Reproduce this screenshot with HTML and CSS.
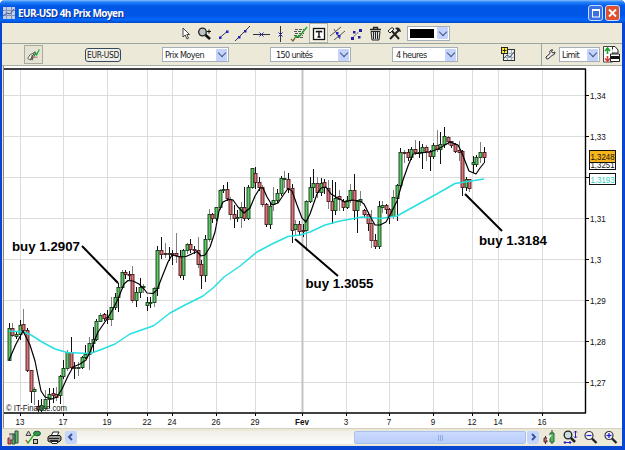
FILE: index.html
```
<!DOCTYPE html>
<html lang="fr">
<head>
    <meta charset="UTF-8">
    <title>EUR-USD 4h Prix Moyen</title>
    <link rel="stylesheet" href="styles.css">
</head>
<body>
    <div class="window">
        <div class="titlebar">
            <svg class="logo" width="12" height="12" viewBox="0 0 12 12"><rect width="12" height="12" fill="#c3cce0"/><path d="M0 3.5H12M0 8.5H12M3.5 0V12M8.5 0V12" stroke="#8792b8"/><path d="M0 9L4 6L7 7L11 2" stroke="#405aa0" fill="none"/></svg>
            <span class="name">EUR-USD 4h Prix Moyen</span>
            <div class="winbtn"><svg width="14" height="15"><rect x="3.5" y="4" width="7" height="7" fill="none" stroke="#fff"/><path d="M3 4H11" stroke="#fff" stroke-width="2"/></svg></div>
            <div class="winbtn close"><svg width="14" height="15"><path d="M3 3.500L10 10.500M10 3.500L3 10.500" stroke="#fff" stroke-width="1.8"/></svg></div>
        </div>

        <div class="tools">
            <svg class="tool" viewBox="0 0 19 20"><path d="M7 5V14L9.2 12L11 16L12.5 15.2L10.8 11.5H13.5Z" fill="#fff" stroke="#333" stroke-width=".9"/></svg>
            <svg class="tool" viewBox="0 0 19 20"><circle cx="7.5" cy="9" r="3.8" fill="#bcc4c4" stroke="#222" stroke-width="1.3"/><path d="M10.5 12L15 16" stroke="#111" stroke-width="2.6"/><path d="M12 8.5H16M14 6.5V10.5" stroke="#111"/></svg>
            <svg class="tool" viewBox="0 0 19 20"><path d="M6 14.5L13 8.5" stroke="#446"/><path d="M5 13.5h2.5v2.5H5zM12 7.5h2.5v2.5H12z" fill="#2222b4"/></svg>
            <svg class="tool" viewBox="0 0 19 20"><path d="M2 18L17 3" stroke="#333"/><path d="M5 13h2.500v2.500H5zM11 7h2.500v2.500H11z" fill="#2222b4"/></svg>
            <svg class="tool" viewBox="0 0 19 20"><path d="M1 11.500H18" stroke="#333"/><path d="M7.500 9.500L11.500 13.500M11.500 9.500L7.500 13.500" stroke="#2222b4"/></svg>
            <svg class="tool" viewBox="0 0 19 20"><path d="M9.500 3V19" stroke="#333"/><path d="M7.500 9.500L11.500 13.500M11.500 9.500L7.500 13.500" stroke="#2222b4"/></svg>
            <svg class="tool" viewBox="0 0 19 20"><path d="M5 6.500H14M4 8.500H13M5 10.500H14M4 12.500H13M6 14.500H14" stroke="#555" stroke-dasharray="3 1"/><path d="M1 16L3 18L6 13L9 14L17 4" fill="none" stroke="#17a22b" stroke-width="1.300"/><path d="M1 16L3 18L5 15" fill="none" stroke="#d33"/></svg>
            <svg class="tool pressed" viewBox="1 1 17 18"><rect x="4.500" y="5.500" width="11" height="11" fill="#fff" stroke="#111" stroke-width="1.300"/><path d="M7.500 9.500V8.500H12.500V9.500M10 8.500V14M8.500 14H11.500" fill="none" stroke="#111" stroke-width="1.400"/></svg>
            <svg class="tool" viewBox="0 0 19 20"><path d="M2 13L13 4M6 17L17 8M6 6L12 16" stroke="#555"/><path d="M8 9h2.500v2.500H8zM10 12h2.500v2.500H10z" fill="#2222c4"/></svg>
            <svg class="tool" viewBox="0 0 19 20"><path d="M5 15L14 7" stroke="#446" stroke-dasharray="2 1"/><path d="M4 14h3v3H4zM12 6h3v3h-3zM6 8h2.500v2.500H6zM11 13h2.500v2.500H11z" fill="#22229c"/></svg>
            <svg class="tool" viewBox="0 0 19 20"><path d="M4 6.500H15M7.500 6V4.500H11.500V6" fill="none" stroke="#222" stroke-width="1.300"/><path d="M5 8.500H14L13 17H6Z" fill="#ddd" stroke="#222"/><path d="M7.500 9V16M9.500 9V16M11.500 9V16" stroke="#222"/></svg>
            <svg class="tool" viewBox="0 0 19 20"><path d="M5 16L14 7M7 8L14 16" stroke="#222" stroke-width="2"/><path d="M3 8L7 4.500L9 6L5 10Z" fill="#fff" stroke="#222"/><path d="M10 5Q15 3 16 9L13 8Z" fill="#222"/></svg>
            <div class="combo color"><span class="swatch"></span><span class="arrow"></span></div>
        </div>

        <div class="options">
            <svg class="edit" viewBox="0 0 19 19"><path d="M3 14Q5 9 9 8Q12 5 12 8L9 14Q5 17 3 14" fill="#f4f3ea" stroke="#555"/><path d="M6 15L11 7M8 10V16" stroke="#333"/><path d="M10 11L12 8L13 10L16 4" fill="none" stroke="#19a52c" stroke-width="1.300"/><path d="M10 12.500H14" stroke="#c55"/></svg>
            <div class="symbol">EUR-USD</div>
            <div class="combo price"><span>Prix Moyen</span><span class="arrow"></span></div>
            <div class="combo units"><span>150 unités</span><span class="arrow"></span></div>
            <div class="combo period"><span>4 heures</span><span class="arrow"></span></div>
            <svg class="addchart" width="15" height="15"><rect x="2.500" y="2.500" width="11" height="11" fill="#e7ecf0" stroke="#333"/><path d="M3 6.500H13M3 10.500H13M6.500 3V13M10.500 3V13" stroke="#a4b1c0"/><path d="M3 11L6 8L9 10L13 5" fill="none" stroke="#456"/><rect x=".5" y=".5" width="6" height="6" fill="#ffed32" stroke="#222"/><path d="M1.500 3.500H5.500M3.500 1.500V5.500" stroke="#222"/></svg>
            <div class="orders">
                <svg width="11" height="11"><path d="M1 8L5 4.500Q4 2 6 1L7.500 .7L6.500 3L8 4L10 3Q10 6 7 6.500L3 10Q1 10.500 1 8Z" fill="#eee" stroke="#333"/></svg>
                <div class="combo limit"><span>Limit</span><span class="arrow"></span></div>
                <svg width="17" height="17"><path d="M.5 .5H9.500V16H.5Z" fill="#fff" stroke="#444"/><path d="M4.500 8V3M2 5L4.500 2L7 5" fill="none" stroke="#16a52c" stroke-width="1.600"/><path d="M4.500 10V15M2 12.500L4.500 15L7 12.500" fill="none" stroke="#dc3a3a" stroke-width="1.600"/><path d="M9.500 3V.5H12L15 4V7H9M7.500 8H16.500V15.500H7.500Z" fill="#fff" stroke="#222"/><path d="M8 11.500H16" stroke="#111" stroke-width="3"/></svg>
            </div>
        </div>

        <svg class="chart" id="chart" width="619" height="362" viewBox="3 66 619 362"></svg>

        <div class="statusbar">
            <svg width="12" height="15"><path d="M8 1H11V13H8ZM5 4H8V14H5Z" fill="#67ba65" stroke="#254"/><path d="M1 8H4V14H1Z" fill="#e05c5c" stroke="#633"/><path d="M2 4H6V10H3" fill="#bbb" stroke="#444"/></svg>
            <svg class="shapes" width="17" height="15"><path d="M1 5.500L3.500 1L6 5.500Z" fill="#ccc" stroke="#444"/><ellipse cx="12" cy="3.500" rx="3.500" ry="2.300" fill="#2c9a4a" stroke="#254"/><path d="M1 10L3 13L8 6L11 5" fill="none" stroke="#2a2" stroke-width="1.300"/><path d="M1 10L3 13" stroke="#d44"/><rect x="8.500" y="9.500" width="4" height="4" fill="#ccb" stroke="#222"/></svg>
            <svg class="printer" width="15" height="15"><path d="M4 6L6 2H12L10 6" fill="#fff" stroke="#222"/><path d="M1 7L3 5.500H13L14 7V10L12 12H3L1 11Z" fill="#999" stroke="#111"/><path d="M2 8.500H12M3 10.500H11" stroke="#222"/><path d="M4 11.500H11L10 13.500H5Z" fill="#fff" stroke="#222"/></svg>
            <div class="scroll">
                <div class="sbtn"><svg width="12" height="12"><path d="M7 3L4 6L7 9" fill="none" stroke="#335095" stroke-width="1.800"/></svg></div>
                <div class="thumb"><i></i><i></i><i></i></div>
                <div class="sbtn"><svg width="12" height="12"><path d="M5 3L8 6L5 9" fill="none" stroke="#335095" stroke-width="1.800"/></svg></div>
            </div>
            <svg class="candleicon" width="12" height="15"><path d="M7 3H11V12H7Z" fill="#59b659" stroke="#264"/><path d="M9 0V3M9 12V14M2.500 6V14" stroke="#333"/><path d="M1 8H4V12H1Z" fill="#b66" stroke="#533"/><path d="M4 10L8 5" stroke="#eee" stroke-width="2"/></svg>
            <svg class="fit" width="15" height="15"><circle cx="5" cy="5" r="3.800" fill="#cdd" stroke="#222" stroke-width="1.300"/><path d="M8 8L12 12" stroke="#222" stroke-width="2.500"/><path d="M12.500 1V8M11 2.500L12.500 1L14 2.500M11 6.500L12.500 8L14 6.500M1 12.500H8M2.500 11L1 12.500L2.500 14M6.500 11L8 12.500L6.500 14" fill="none" stroke="#2222c0"/></svg>
            <svg class="zoomout" width="14" height="15"><circle cx="5" cy="5.500" r="4" fill="#fff" stroke="#334" stroke-width="1.200"/><path d="M2.500 5.500H7.500" stroke="#22c" stroke-width="1.300"/><path d="M8 8.500L12.500 13" stroke="#222" stroke-width="2.300"/></svg>
            <svg class="zoomin" width="14" height="15"><circle cx="5" cy="5.500" r="4" fill="#fff" stroke="#334" stroke-width="1.200"/><path d="M2.500 5.500H7.500M5 3V8" stroke="#22c" stroke-width="1.300"/><path d="M8 8.500L12.500 13" stroke="#222" stroke-width="2.300"/></svg>
        </div>
    </div>

    <script src="chart.js"></script>
</body>
</html>
```
FILE: chart.js
```
var chart = document.getElementById("chart");

// x, high, body top, body bottom, low, g = up / r = down
var candles = [
    [9,323,328,360,360,"g"],[12.5,323,328,335,336,"r"],[16.5,331,334,336,338,"g"],[20,320,325,334,339,"g"],
    [23.5,309,324,330,331,"r"],[27.3,328,330,370,371,"r"],[31,370,370,391,402,"r"],[34.5,387,389,391,404,"g"],
    [38,400,406,409,411,"r"],[41.7,399,405,410,411,"g"],[45.5,390,399,408,410,"g"],[49,388,394,399,407,"g"],
    [53,388,393,395,402,"r"],[56.7,387,394,397,400,"r"],[60.3,375,376,395,403,"g"],[63.7,360,368,376,378,"g"],
    [67.3,350,352,368,370,"g"],[71,337,352,367,369,"r"],[74.7,362,367,368,378,"r"],[78.3,362,367,368,375,"g"],
    [82,356,357,367,368,"g"],[85.7,345,354,357,358,"g"],[89.3,337,343,354,369,"g"],[93,327,339,343,352,"g"],
    [96.7,319,321,339,340,"g"],[100.3,313,315,321,321,"g"],[104,313,314,318,320,"r"],[107.6,310,317,319,323,"r"],
    [111.3,297,307,319,325,"g"],[115,293,297,307,309,"g"],[118.7,283,287,297,311,"g"],[122,270,272,287,288,"g"],
    [125.7,270,272,274,278,"r"],[129.3,271,274,275,279,"r"],[132.8,266,274,300,302,"r"],[136.5,287,292,300,306,"g"],
    [140,278,287,292,297,"g"],[143.5,284,286,287,292,"g"],[147,297,302,305,310,"g"],[150.7,297,302,303,307,"g"],
    [154.2,287,288,302,306,"g"],[157.8,246,250,288,295,"g"],[161.5,237,250,254,258,"r"],[165.3,243,253,254,257,"r"],
    [169,247,253,254,260,"g"],[172.7,250,253,254,264,"r"],[176.3,233,253,255,262,"r"],[180,250,256,275,277,"r"],
    [183.5,249,250,275,279,"g"],[187,243,244,250,253,"g"],[190.7,239,244,249,252,"r"],[194.5,246,249,250,253,"r"],
    [198,237,250,264,267,"r"],[201.7,260,264,275,288,"r"],[205.3,235,239,275,281,"g"],[209,209,214,239,241,"g"],
    [212.5,213,214,218,222,"r"],[216.3,207,207,218,220,"g"],[220,189,190,207,209,"g"],[223.7,185,189,190,192,"g"],
    [227,182,189,198,200,"r"],[230.7,197,199,214,219,"r"],[234.3,205,214,218,227,"r"],[237.7,210,217,218,221,"g"],
    [241,202,207,217,227,"g"],[244.7,187,207,218,220,"r"],[248.3,185,187,218,219,"g"],[252,168,168,187,188,"g"],
    [255.7,167,173,182,188,"r"],[259.3,177,182,187,190,"r"],[262.7,185,187,204,206,"r"],[266.3,203,204,224,226,"r"],
    [270,202,206,224,228,"g"],[273.7,187,200,204,210,"g"],[277.3,189,193,200,202,"g"],[281,176,178,193,195,"g"],
    [284.7,171,178,179,187,"g"],[288.3,173,179,188,192,"r"],[292,184,188,230,242,"r"],[295.7,220,224,229,234,"g"],
    [299.3,221,224,231,235,"r"],[303,224,230,231,236,"r"],[306.5,200,201,230,250,"g"],[310,177,187,201,202,"g"],
    [313.7,169,183,187,197,"g"],[317.3,177,183,192,197,"r"],[321,178,183,192,195,"g"],[324.7,179,182,187,193,"r"],
    [328.3,180,188,201,208,"r"],[332,180,201,210,223,"r"],[335.7,182,198,210,214,"g"],[339.3,190,196,199,210,"r"],
    [343.3,199,201,207,210,"r"],[347,196,200,207,208,"g"],[350.5,184,190,200,202,"g"],[354,174,190,210,219,"r"],
    [357.3,200,201,210,232,"g"],[360.7,191,199,201,205,"g"],[364.3,209,210,214,216,"r"],[368,212,214,223,230,"r"],
    [371.7,210,223,240,247,"r"],[375.3,234,240,246,248,"r"],[379,201,206,246,248,"g"],[382.7,201,205,207,212,"g"],
    [386,204,205,209,213,"r"],[389.7,208,209,216,223,"r"],[393.3,190,197,216,218,"g"],[397,184,185,198,220,"g"],
    [400.7,148,152,185,187,"g"],[404.3,150,152,153,162,"r"],[408,149,152,157,160,"r"],[411.7,147,149,157,159,"g"],
    [415.3,140,149,152,154,"r"],[419,141,152,153,157,"g"],[422.7,144,147,152,168,"g"],[426.3,145,147,151,160,"r"],
    [430,150,151,156,170,"r"],[433.7,143,145,156,158,"g"],[437.3,130,145,149,151,"r"],[440.7,132,144,149,163,"g"],
    [444.3,127,136,144,147,"g"],[448,136,137,141,144,"r"],[451.7,141,141,145,147,"r"],[455.3,143,144,151,152,"r"],
    [459.3,141,150,152,160,"r"],[462.7,150,151,187,195,"r"],[466.2,177,179,187,190,"g"],[469.3,179,179,188,191,"r"],
    [473,156,162,164,172,"g"],[476.7,155,157,164,166,"g"],[480.3,142,152,157,162,"g"],[484,147,152,157,162,"r"]
];

var fast = "9,360 16,344 23,331 30,345 35,361 38,376 41,391 45,397 52,399 57,397 62,389 68,376 73,367 80,364 86,360 90,352 98,332 107,319 113,309 118,299 124,284 128,280.5 133,281 139,284 144,289 147,293 153,293.5 157,290 162,277 168,262 172,255 180,257 186,256.5 197,251.5 201,256 205,255 210,247 215,232 219,211 223,202 228,199.5 233,200 238,207 244,213 250,208 255,196 260,188 263,188 267,197 272,205 278,203 284,194 288,188.5 292,191 297,205 302,218 306,222 310,214 317,194 321,188 326,187 331,194 336,197 345,202 352,200 360,201 364,204 370,216 375,225 380,225 386,222 391,213 397,201 403,180 408,166 413,154 420,153 430,152 438,149 445,145 450,142 458,145 462,153 465,161 469,171 476,174 480,168 484,163";
var slow = "9,331 24,332 31,335 42,342 55,349 67,352.5 90,353.5 100,350 115,344 130,334 150,327 154,325.5 170,313 185,305 203,296 213,288 224,277 240,266 257,252 272,244 288,236.5 300,235 310,232 325,225 340,221 362,217 380,218.5 397,216 415,206 435,195 455,183.5 468,181.5 484,179";

var prices = [["1,34",95],["1,33",136],["",177],["1,31",218],["1,3",259],["1,29",300],["1,28",341],["1,27",382]];
var days = [["13",20],["17",63],["19",107],["22",147],["24",172],["26",216],["29",255],["Fev",302],["3",346],["7",389],["9",433],["12",472],["14",498],["16",542]];

var out = "";

function line(x1, y1, x2, y2, cls)
{
    out += '<line class="' + cls + '" x1="' + x1 + '" y1="' + y1 + '" x2="' + x2 + '" y2="' + y2 + '"/>';
}

function text(str, x, y, width, cls)
{
    out += '<text class="' + cls + '" x="' + x + '" y="' + y + '" textLength="' + width + '" lengthAdjust="spacingAndGlyphs">' + str + '</text>';
}

function box(x, y, w, h, cls)
{
    out += '<rect class="' + cls + '" x="' + x + '" y="' + y + '" width="' + w + '" height="' + h + '"/>';
}

//grid and axes
prices.forEach(function(p){
    line(4, p[1] + 0.5, 585, p[1] + 0.5, "grid");
    line(586, p[1] + 0.5, 589, p[1] + 0.5, "axis");
    if(p[0]) text(p[0], 590, p[1] + 3.5, p[0].length * 4.6 - 2.6, "label");
});
days.forEach(function(d){
    line(d[1] + 0.5, 70, d[1] + 0.5, 412, d[0] == "Fev" ? "grid month" : "grid");
    line(d[1] + 0.5, 413, d[1] + 0.5, 416, "axis");
    var w = d[0] == "Fev" ? 14 : d[0].length * 4.5;
    text(d[0], d[1] - w / 2, 425, w, d[0] == "Fev" ? "label bold" : "label");
});
line(3.5, 66, 3.5, 428, "edge");
line(4, 69, 586, 69, "frame");
line(4, 413, 586, 413, "frame");
line(585.5, 69, 585.5, 413, "axis right");

//candles
candles.forEach(function(c, i){
    var x = Math.floor(c[0]) + 0.5;
    line(x, c[1], x, c[4] + 1, i % 3 == 1 ? "wick soft" : "wick");
    box(x - 1.5, c[2] + 0.5, 3, Math.max(c[3] - c[2], 0.5), c[5] == "g" ? "up" : "down");
});
out += '<polyline class="slow" points="' + slow + '"/>';
out += '<polyline class="fast" points="' + fast + '"/>';
text("© IT-Finance.com", 6, 411, 61, "credit");

//notes
line(82, 246, 118, 283, "pointer");
line(295, 239, 338, 276, "pointer");
line(465, 194, 502, 231, "pointer");
text("buy 1.2907", 12, 251, 68, "note");
text("buy 1.3055", 305.5, 287.5, 68, "note");
text("buy 1.3184", 479, 245, 68, "note");

//price tags
box(589.5, 158.5, 26, 11, "tag");
text("1,3251", 590.5, 167.5, 24, "label");
box(589.5, 150.5, 26, 12, "tag last");
text("1,3248", 590.5, 160, 24, "label");
box(589.5, 173.5, 26, 11, "tag");
text("1,3193", 590.5, 183, 24, "label cyan");

chart.innerHTML = out;
```
FILE: styles.css
```
*{
    margin: 0;
    padding: 0;
    box-sizing: border-box;
}
body{
    overflow: hidden;
    background: #fff;
    font: 9px "DejaVu Sans Condensed", "DejaVu Sans", sans-serif;
    color: #222;
}
svg{
    display: block;
    flex: none;
}
.window{
    width: 625px;
    height: 450px;
    display: flex;
    flex-direction: column;
    background: #ece9d8;
    border: solid #0845d0;
    border-width: 0 3px 4px 2px;
    border-radius: 5px 5px 0 0;
}
.titlebar{
    height: 23px;
    margin: 0 -3px 0 -2px;
    padding: 2px 5px 0 3px;
    display: flex;
    align-items: center;
    border-radius: 5px 5px 0 0;
    background: linear-gradient(#8cbcf8 0, #2383fb 2px, #0058e6 6px, #0055e5 15px, #0368fb 20px, #0047c6 23px);
}
.name{
    margin-left: 3px;
    flex: 1;
    font: bold 10px "Open Sans", sans-serif;
    letter-spacing: -0.55px;
    color: #fff;
    text-shadow: 1px 1px #0f2e8f;
    white-space: nowrap;
}
.winbtn{
    width: 15px;
    height: 16px;
    border: 1px solid #c7dcff;
    border-radius: 3px;
    background: #3971e5;
    overflow: hidden;
}
.close{
    margin-left: 2px;
    background: #df502c;
}
.tools{
    height: 20px;
    padding-left: 174px;
    display: flex;
    align-items: center;
}
.tool{
    width: 19px;
    height: 20px;
}
.pressed{
    background: #f4f3ea;
    border: 1px solid #b4b4a5;
}
.combo{
    height: 15px;
    padding: 0 1px 0 2px;
    display: flex;
    align-items: center;
    justify-content: space-between;
    background: #fff;
    border: 1px solid #a4afb9;
    white-space: nowrap;
}
.arrow{
    width: 11px;
    height: 12px;
    display: flex;
    align-items: center;
    justify-content: center;
    background: #c3d3fb;
    border-radius: 1px;
}
.arrow::before{
    content: "";
    width: 5px;
    height: 5px;
    margin-top: -3px;
    border: solid #40557f;
    border-width: 0 1.5px 1.5px 0;
    transform: rotate(45deg);
}
.color{
    width: 43px;
    margin-left: 3px;
}
.swatch{
    width: 24px;
    height: 9px;
    background: #000;
}
.options{
    height: 23px;
    padding-left: 22px;
    display: flex;
    align-items: center;
    border-top: 1px solid #9aa5a0;
    border-bottom: 1px solid #a9aca2;
}
.edit{
    width: 19px;
    height: 19px;
    border: 1px solid #aaa99d;
    background: #e5e3d4;
}
.symbol{
    width: 36px;
    height: 14px;
    margin-left: 42px;
    line-height: 12px;
    text-align: center;
    background: #f0efe7;
    border: 1px solid #34495e;
    border-radius: 3px;
    font-size: 8.4px;
    letter-spacing: -0.3px;
}
.price{
    width: 67px;
    margin-left: 41px;
    letter-spacing: -0.55px;
}
.units{
    width: 81px;
    margin-left: 41px;
    padding-left: 5px;
    letter-spacing: -0.65px;
}
.period{
    width: 66px;
    margin-left: 41px;
    padding-left: 3px;
    letter-spacing: -0.6px;
}
.addchart{
    margin-left: 43px;
}
.orders{
    height: 22px;
    margin-left: 25px;
    padding-left: 3px;
    display: flex;
    align-items: center;
    gap: 3px;
    border-left: 1px solid #9aa5a0;
}
.limit{
    width: 41px;
    letter-spacing: -0.6px;
}

/* chart */
.chart{
    margin-left: 1px;
    background: #fff;
}
.edge{
    stroke: #888;
}
.grid{
    stroke: #dcdcdc;
}
.month{
    stroke: #c4c4c4;
    stroke-width: 2;
}
.axis{
    stroke: #000;
}
.right{
    stroke-width: 1.4;
}
.frame{
    stroke: #000;
    stroke-width: 1.6;
}
.wick{
    stroke: #111;
}
.soft{
    stroke: #808080;
}
.up, .down{
    fill: #5cc964;
    stroke: #163d1a;
    stroke-width: 0.9;
}
.down{
    fill: #da7479;
    stroke: #4b1a1e;
}
.fast, .slow{
    fill: none;
    stroke: #000;
    stroke-width: 1.2;
    stroke-linejoin: round;
}
.slow{
    stroke: #28dfe2;
    stroke-width: 1.5;
}
.label, .credit{
    font: 9.5px "Liberation Sans", Arial, sans-serif;
    fill: #111;
}
.bold{
    font-weight: bold;
}
.cyan{
    fill: #35cfc8;
}
.note{
    font: bold 13.5px "Liberation Sans", Arial, sans-serif;
    fill: #000;
}
.pointer{
    stroke: #000;
    stroke-width: 2;
}
.tag{
    fill: #fff;
    stroke: #111;
}
.last{
    fill: #f7b51c;
}

/* bottom bar */
.statusbar{
    height: 18px;
    padding-left: 5px;
    display: flex;
    align-items: center;
    border-top: 1px solid #d4d1c2;
}
.shapes{
    margin-left: 6px;
}
.printer{
    margin-left: 5px;
}
.scroll{
    width: 474px;
    height: 13px;
    margin-left: 3px;
    display: flex;
    justify-content: space-between;
    background: linear-gradient(#f0efe8, #fefefb);
}
.sbtn{
    width: 12px;
    height: 13px;
    background: #c5d5fc;
    border-radius: 2px;
}
.thumb{
    width: 172px;
    margin-left: auto;
    margin-right: 1px;
    display: flex;
    align-items: center;
    justify-content: center;
    gap: 1px;
    background: linear-gradient(#cbdafe, #b9cdfa);
    border: 1px solid #a9c0ee;
    border-radius: 2px;
}
.thumb i{
    width: 1px;
    height: 6px;
    background: #91a9dc;
}
.candleicon{
    margin-left: 4px;
}
.fit{
    margin-left: 8px;
}
.zoomout, .zoomin{
    margin-left: 6px;
}
```
